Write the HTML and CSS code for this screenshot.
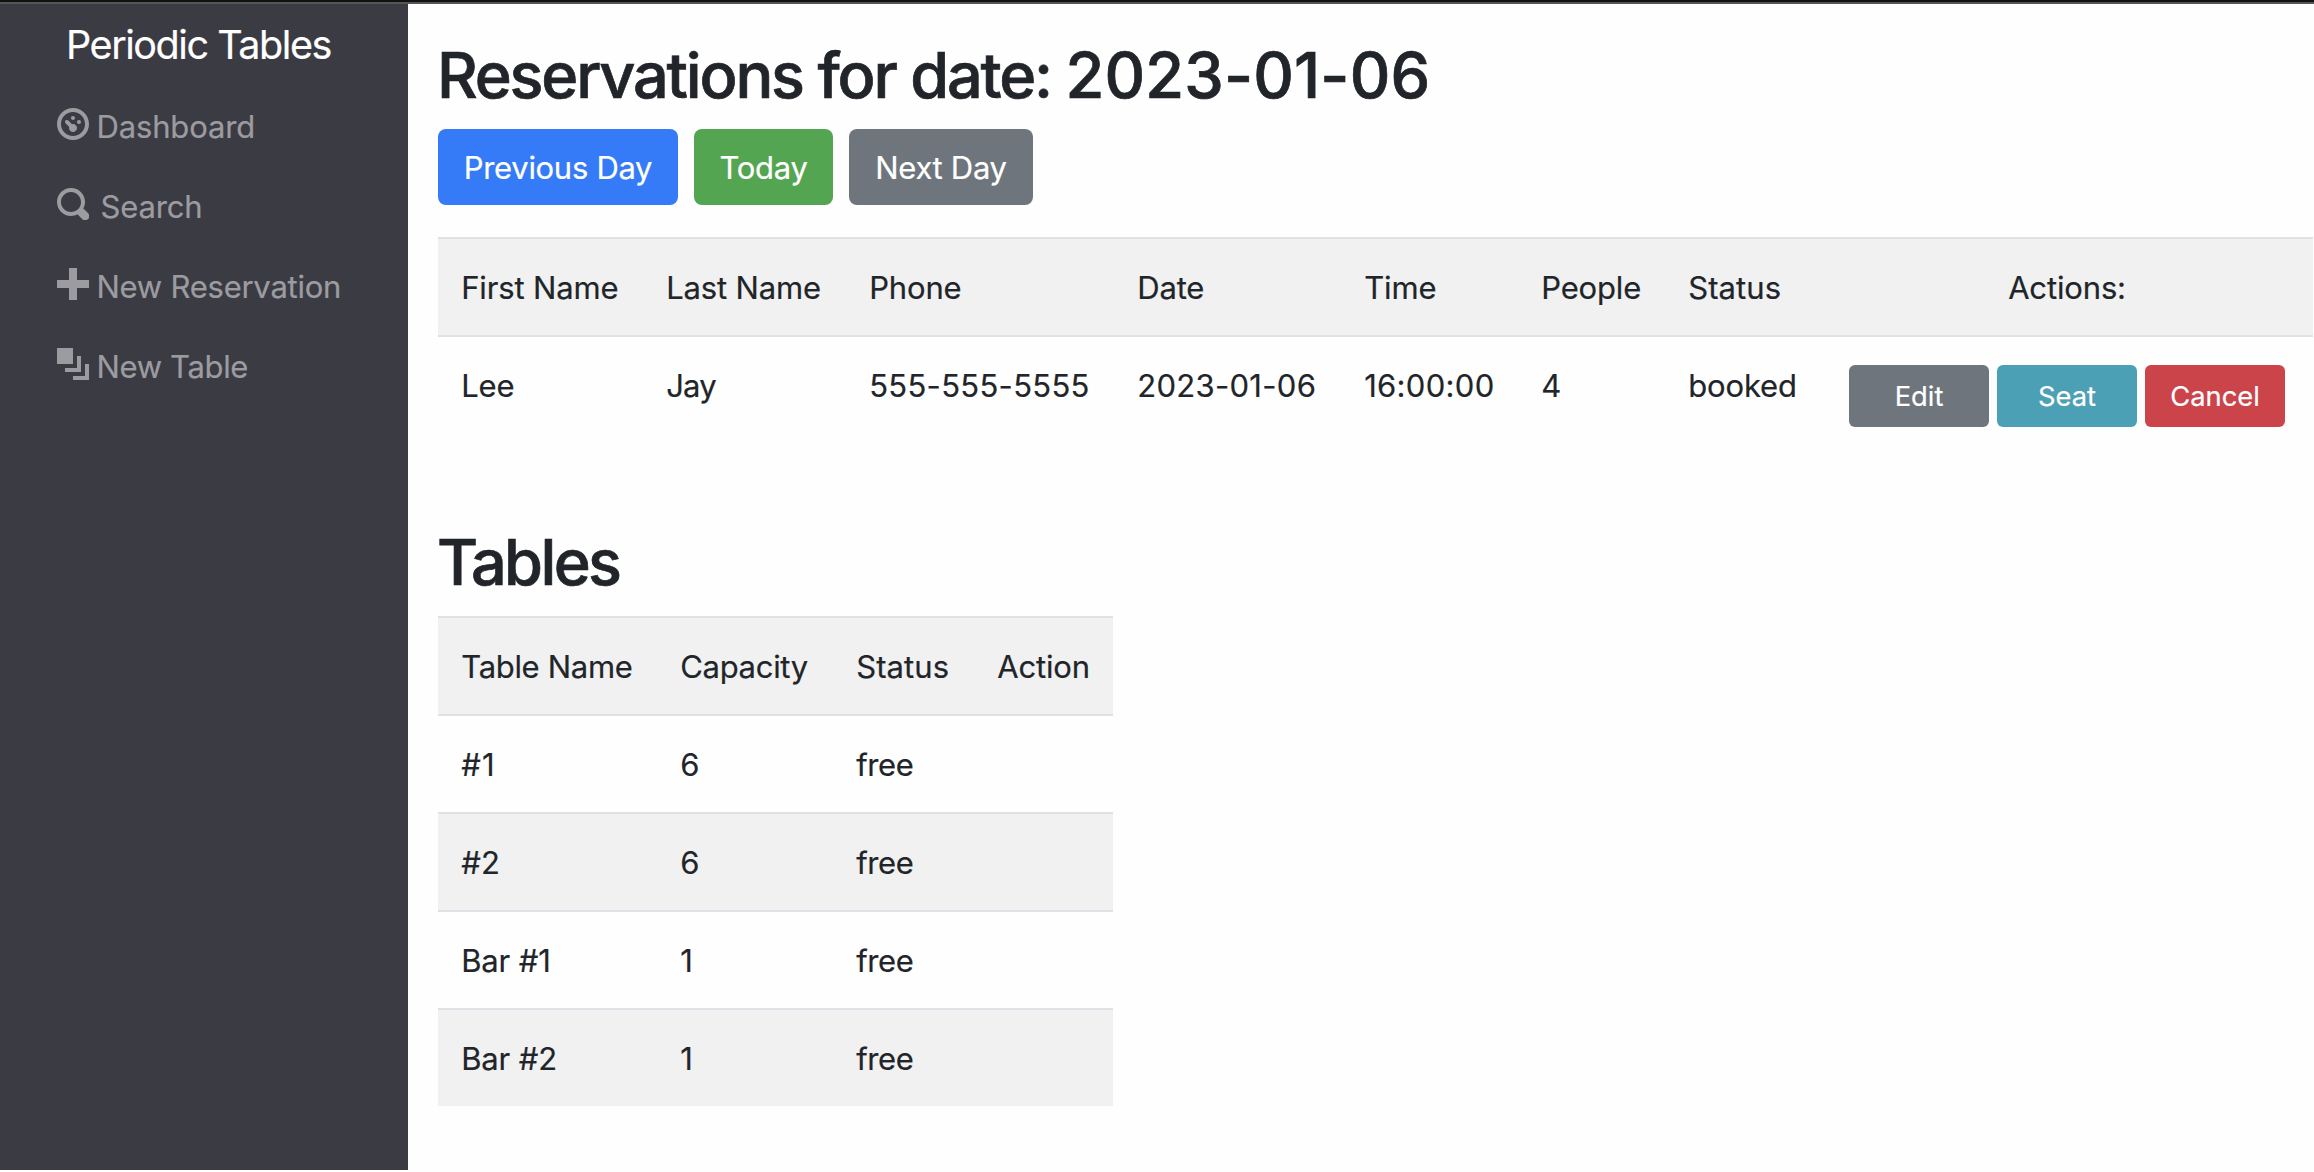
FILE: index.html
```html
<!DOCTYPE html>
<html lang="en">
<head>
<meta charset="utf-8">
<title>Periodic Tables</title>
<link rel="stylesheet" href="styles.css">
</head>
<body>
<div class="topline"></div>
<div class="layout">
  <nav class="sidebar">
    <a class="brand">Periodic Tables</a>
    <ul class="menu">
      <li class="menu-item">
        <svg class="icon" viewBox="0 0 8 8"><path d="M4 0c-2.2 0-4 1.8-4 4s1.8 4 4 4 4-1.8 4-4-1.8-4-4-4zm0 1c1.66 0 3 1.34 3 3s-1.34 3-3 3-3-1.34-3-3 1.34-3 3-3zm0 1c-.28 0-.5.22-.5.5s.22.5.5.5.5-.22.5-.5-.22-.5-.5-.5zm-1.66 1a.5.5 0 0 0-.19.84l.91.91c-.02.08-.06.16-.06.25 0 .55.45 1 1 1s1-.45 1-1-.45-1-1-1c-.09 0-.17.04-.25.06l-.91-.91a.5.5 0 0 0-.44-.16.5.5 0 0 0-.06 0zm3.16 0c-.28 0-.5.22-.5.5s.22.5.5.5.5-.22.5-.5-.22-.5-.5-.5z"/></svg>
        <span class="label">Dashboard</span>
      </li>
      <li class="menu-item">
        <svg class="icon" viewBox="0 0 8 8"><path d="M3.5 0c-1.93 0-3.5 1.57-3.5 3.5s1.57 3.5 3.5 3.5c.59 0 1.17-.14 1.66-.41a1 1 0 0 0 .13.13l1 1a1.02 1.02 0 1 0 1.44-1.44l-1-1a1 1 0 0 0-.16-.13c.27-.49.44-1.06.44-1.66 0-1.93-1.55-3.5-3.5-3.5zm0 1c1.39 0 2.5 1.11 2.5 2.5 0 .66-.24 1.27-.66 1.72l-.03.03a1 1 0 0 0-.13.13c-.44.4-1.04.63-1.69.63-1.39 0-2.5-1.11-2.5-2.5s1.11-2.5 2.5-2.5z"/></svg>
        <span class="label search">Search</span>
      </li>
      <li class="menu-item">
        <svg class="icon" viewBox="0 0 8 8"><path d="M3 0v3h-3v2h3v3h2v-3h3v-2h-3v-3h-2z"/></svg>
        <span class="label reservation">New Reservation</span>
      </li>
      <li class="menu-item">
        <svg class="icon" viewBox="0 0 8 8"><path d="M0 0v4h4v-4h-4zm5 2v3h-3v1h4v-4h-1zm2 2v3h-3v1h4v-4h-1z"/></svg>
        <span class="label new-table">New Table</span>
      </li>
    </ul>
  </nav>
  <main class="content">
    <h1 class="title">Reservations for date: <span class="title-date">2023-01-06</span></h1>
    <div class="day-nav">
      <button class="btn prev">Previous Day</button>
      <button class="btn today">Today</button>
      <button class="btn next">Next Day</button>
    </div>
    <table class="table reservations">
      <colgroup><col class="c-first"><col class="c-last"><col class="c-phone"><col class="c-date"><col class="c-time"><col class="c-people"><col class="c-status"><col></colgroup>
      <tbody>
        <tr class="shaded"><td>First Name</td><td>Last Name</td><td>Phone</td><td>Date</td><td>Time</td><td>People</td><td class="status">Status</td><td class="actions-head">Actions:</td></tr>
        <tr><td>Lee</td><td class="tight">Jay</td><td class="num">555-555-5555</td><td class="num">2023-01-06</td><td class="num">16:00:00</td><td>4</td><td>booked</td>
          <td class="actions-cell"><div class="actions"><button class="btn small edit">Edit</button><button class="btn small seat">Seat</button><button class="btn small cancel">Cancel</button></div></td></tr>
      </tbody>
    </table>
    <h1 class="title tables-title">Tables</h1>
    <table class="table seating">
      <colgroup><col class="c-name"><col class="c-capacity"><col class="c-state"><col></colgroup>
      <tbody>
        <tr class="shaded"><td class="head">Table Name</td><td class="head">Capacity</td><td class="status">Status</td><td>Action</td></tr>
        <tr><td class="num wide">#1</td><td>6</td><td class="free">free</td><td></td></tr>
        <tr class="shaded"><td class="num">#2</td><td>6</td><td class="free">free</td><td></td></tr>
        <tr><td>Bar #1</td><td>1</td><td class="free">free</td><td></td></tr>
        <tr class="shaded"><td>Bar #2</td><td>1</td><td class="free">free</td><td></td></tr>
      </tbody>
    </table>
  </main>
</div>
</body>
</html>
```
FILE: styles.css
```css
* { box-sizing: border-box; }
body {
  margin: 0;
  height: 1172px;
  overflow: hidden;
  background: #fefefe;
  color: #212529;
  font: 400 31px/48px Inter, "Liberation Sans", sans-serif;
  letter-spacing: -0.15px;
  -webkit-text-stroke: 0.2px currentColor;
}
.topline { height: 4px; background: #111; border-bottom: 2px solid #555; }
.layout { display: flex; height: 1166px; }
.sidebar { flex: none; width: 408px; background: #3b3b44; }
.brand {
  display: block;
  margin: 17px 0 0 66px;
  color: #fff;
  font-size: 39.5px;
  letter-spacing: -1.45px;
}
.menu { list-style: none; margin: 34px 0 0; padding: 0 0 0 57px; color: #9c9ca0; }
.menu-item { display: flex; height: 80px; }
.icon { width: 32px; height: 32px; margin-top: 5px; fill: currentColor; }
.label { margin-left: 7.5px; white-space: nowrap; }
.search { margin-left: 11.5px; }
.reservation { letter-spacing: -0.25px; }
.new-table { letter-spacing: -0.35px; }

.content { flex: 1; padding: 33px 1px 0 30px; }
.title {
  margin: 0 0 16px -1px;
  font-size: 63px;
  font-weight: 500;
  line-height: 76px;
  letter-spacing: -2.18px;
  white-space: nowrap;
  -webkit-text-stroke: 0.7px currentColor;
}
.title-date { letter-spacing: 0.15px; }
.tables-title { margin-left: -1px; letter-spacing: -2.6px; }
.day-nav { display: flex; gap: 16px; margin-bottom: 32px; }
.btn {
  border: 0;
  padding: 2px 0 0;
  height: 76px;
  border-radius: 8px;
  color: #fff;
  font: inherit;
  letter-spacing: -0.3px;
}
.prev { width: 240px; background: #357af6; }
.today { width: 139px; background: #54a551; }
.next { width: 184px; background: #6e757c; }

.table { border-collapse: separate; border-spacing: 0; table-layout: fixed; }
.table td {
  height: 98px;
  padding: 25px 0 23px 23.2px;
  border-top: 2px solid #dee1e5;
  vertical-align: top;
  white-space: nowrap;
}
.shaded { background: #f1f1f1; }
.reservations { width: 1875px; margin-bottom: 91px; }
.c-first { width: 205px; }
.c-last { width: 203px; }
.c-phone { width: 268px; }
.c-date { width: 227px; }
.c-time { width: 177px; }
.c-people { width: 147px; }
.c-status { width: 156px; }
.num { letter-spacing: 0.3px; }
.status { letter-spacing: 0.1px; }
.wide { letter-spacing: 1.2px; }
.tight { letter-spacing: -0.8px; }
.table .actions-head { padding: 25px 0 23px; text-align: center; }
.table .actions-cell { padding: 28px 0 0 28px; }
.actions { display: flex; gap: 8px; }
.small { width: 140px; height: 62px; border-radius: 6px; font-size: 27.3px; letter-spacing: 0; }
.edit { background: #6e757c; }
.seat { background: #4ca0b5; }
.cancel { background: #cb444a; }

.seating { width: 675px; }
.c-name { width: 219px; }
.c-capacity { width: 176px; }
.c-state { width: 141px; }
.head { letter-spacing: -0.3px; }
.free { letter-spacing: -0.4px; }
```
